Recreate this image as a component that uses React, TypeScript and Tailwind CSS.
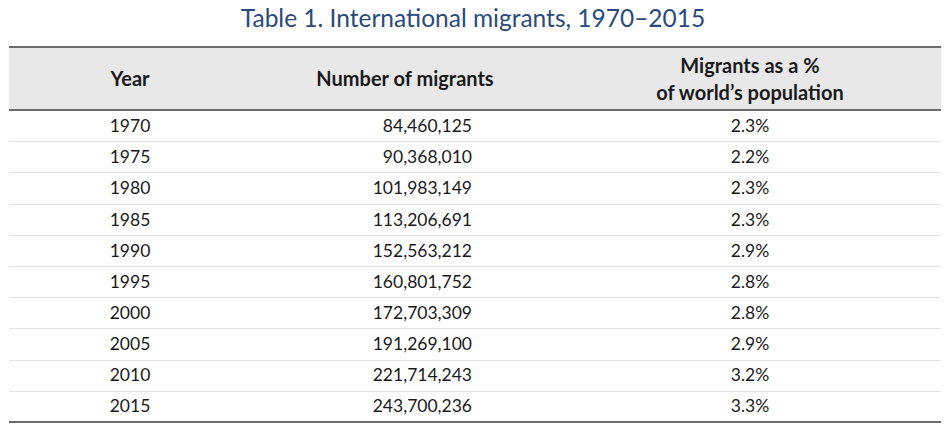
const rows: [string, string, string][] = [
  ["1970", "84,460,125", "2.3%"],
  ["1975", "90,368,010", "2.2%"],
  ["1980", "101,983,149", "2.3%"],
  ["1985", "113,206,691", "2.3%"],
  ["1990", "152,563,212", "2.9%"],
  ["1995", "160,801,752", "2.8%"],
  ["2000", "172,703,309", "2.8%"],
  ["2005", "191,269,100", "2.9%"],
  ["2010", "221,714,243", "3.2%"],
  ["2015", "243,700,236", "3.3%"],
];

export default function App() {
  return (
    <div className="w-[946px] h-[431px] bg-white font-['Lato','Open_Sans',sans-serif] text-[#1a1a1a]">
      <h1 className="pt-[2px] h-[46px] text-center text-[24.5px] text-[#2b4a7c] leading-[32px]">
        Table 1. International migrants, 1970–2015
      </h1>

      <div className="ml-[9px] w-[932px]">
        {/* Header */}
        <div className="flex h-[65px] items-center bg-[#e8e8e9] border-t-2 border-b-2 border-[#6b6b6b] text-[20px] font-bold leading-[27px]">
          <div className="w-[242px] text-center">Year</div>
          <div className="w-[308px] text-center">Number of migrants</div>
          <div className="flex-1 text-center">
            Migrants as a %
            <br />
            of world’s population
          </div>
        </div>

        {/* Body */}
        {rows.map(([year, num, pct], i) => (
          <div
            key={year}
            className={`flex h-[31.2px] items-center text-[17.5px] ${
              i === rows.length - 1 ? "border-b-2 border-[#6b6b6b]" : "border-b border-[#e3e3e3]"
            }`}
          >
            <div className="w-[242px] text-center">{year}</div>
            <div className="w-[308px] text-right pr-[87px]">{num}</div>
            <div className="flex-1 text-center">{pct}</div>
          </div>
        ))}
      </div>
    </div>
  );
}
